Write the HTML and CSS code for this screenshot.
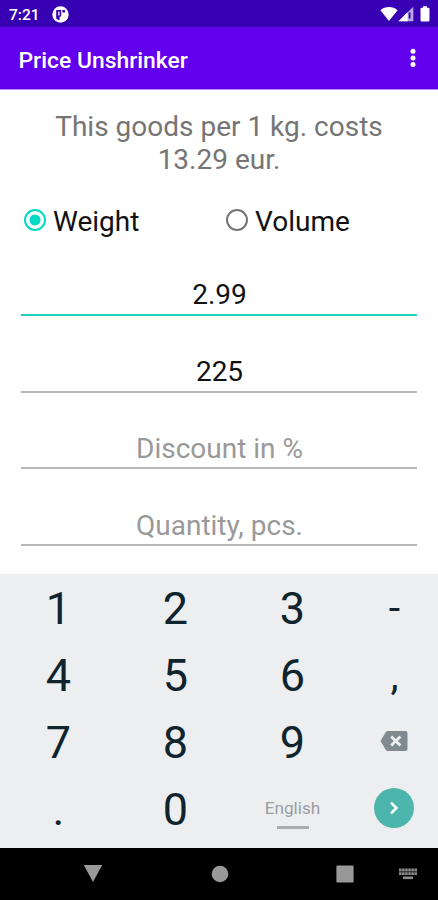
FILE: index.html
```
<!DOCTYPE html>
<html lang="en">
<head>
    <meta charset="UTF-8">
    <meta name="viewport" content="width=device-width, initial-scale=1.0">
    <title>Price Unshrinker</title>
    <link rel="stylesheet" href="styles.css">
</head>

<body>

    <!-- Status Bar -->
    <div class="statusbar">
        <span class="time">7:21</span>
        <svg class="notification" width="17" height="17" viewBox="0 0 17 17">
            <circle cx="8.5" cy="8.5" r="8.2" fill="#fff"/>
            <path d="M4.2 4h5v6.6H7.6V14H6.2L4.2 12.4zM10.4 4h2.6v2.6h-2.6z" fill="#3700b3"/>
            <path d="M6.9 5.4v4.2" stroke="#fff" stroke-width="1.3"/>
        </svg>
        <div class="status-icons">
            <svg width="18" height="16" viewBox="0 0 18 16">
                <path d="M0.4 4.2C5.2 0 12.8 0 17.6 4.2L9 15z" fill="#fff"/>
            </svg>
            <svg width="16" height="16" viewBox="0 0 16 16">
                <path d="M0.5 15.3L15.3 0.7v14.6z" fill="#b9a6e4"/>
                <path d="M0.5 15.3L9.6 6.3v9z" fill="#fff"/>
                <path d="M11.6 6.5v6" stroke="#3700b3" stroke-width="1.8"/>
            </svg>
            <svg class="battery" width="10" height="16" viewBox="0 0 10 16">
                <path d="M3 0.3h4v1.5h1.3q1.2 0 1.2 1.2v11.2q0 1.2-1.2 1.2H1.7q-1.2 0-1.2-1.2V3q0-1.2 1.2-1.2H3z" fill="#fff"/>
            </svg>
        </div>
    </div>

    <!-- App Bar -->
    <header class="appbar">
        <h1>Price Unshrinker</h1>
        <svg width="6" height="20" viewBox="0 0 6 20" fill="#fff">
            <circle cx="3" cy="3.2" r="2.5"/>
            <circle cx="3" cy="9.9" r="2.5"/>
            <circle cx="3" cy="16.6" r="2.5"/>
        </svg>
    </header>

    <!-- Calculator Form -->
    <main class="content">
        <p class="result">This goods per 1 kg. costs<br>13.29 eur.</p>

        <div class="units">
            <label class="unit"><span class="radio checked"></span>Weight</label>
            <label class="unit"><span class="radio"></span>Volume</label>
        </div>

        <form class="fields">
            <input class="active" type="text" value="2.99">
            <input type="text" value="225">
            <input type="text" placeholder="Discount in %">
            <input type="text" placeholder="Quantity, pcs.">
        </form>
    </main>

    <!-- Keyboard -->
    <div class="keyboard">
        <div class="key">1</div>
        <div class="key">2</div>
        <div class="key">3</div>
        <div class="key symbol">-</div>
        <div class="key">4</div>
        <div class="key">5</div>
        <div class="key">6</div>
        <div class="key symbol">,</div>
        <div class="key">7</div>
        <div class="key">8</div>
        <div class="key">9</div>
        <div class="key action">
            <svg width="28" height="20" viewBox="0 0 28 20">
                <path d="M7.6 0H25.5Q27.5 0 27.5 2V18Q27.5 20 25.5 20H7.6Q6.6 20 6 19.2L0.5 10L6 0.8Q6.6 0 7.6 0z" fill="#7f8b8e"/>
                <path d="M11.2 5.4l9.2 9.2M20.4 5.4l-9.2 9.2" stroke="#eceff1" stroke-width="2.8"/>
            </svg>
        </div>
        <div class="key">.</div>
        <div class="key">0</div>
        <div class="key space">English</div>
        <div class="key action">
            <div class="next">
                <svg width="10" height="14" viewBox="0 0 10 14">
                    <path d="M2 1.6L7.4 7L2 12.4" fill="none" stroke="#fff" stroke-width="2.6"/>
                </svg>
            </div>
        </div>
    </div>

    <!-- Navigation Bar -->
    <nav class="navbar">
        <svg width="20" height="18" viewBox="0 0 20 18"><path d="M0.8 0h18.4L10 17z" fill="#999"/></svg>
        <svg width="18" height="18" viewBox="0 0 18 18"><circle cx="9" cy="9" r="8.3" fill="#999"/></svg>
        <svg width="18" height="18" viewBox="0 0 18 18"><rect x="0.4" y="0.4" width="17.2" height="17.2" rx="1" fill="#999"/></svg>
        <svg class="switcher" width="18" height="12" viewBox="0 0 18 12">
            <path d="M0 2h18M0 5.6h18" stroke="#8a8a8a" stroke-width="2.8" stroke-dasharray="2.6 0.48"/>
            <path d="M4 9.8h10" stroke="#8a8a8a" stroke-width="2.6"/>
        </svg>
    </nav>

</body>
</html>
```
FILE: styles.css
```
* {
    box-sizing: border-box;
}

body {
    font-family: Roboto, "Liberation Sans", sans-serif;
    margin: 0;
    height: 900px;
    display: flex;
    flex-direction: column;
    background-color: #fff;
    overflow: hidden;
}

svg {
    display: block;
}

/* Status Bar Styles */
.statusbar {
    height: 27px;
    display: flex;
    align-items: center;
    padding: 1px 8px 0 9px;
    background-color: #3700b3;
    color: #fff;
}

.time {
    width: 43px;
    padding-top: 1px;
    font-size: 15.5px;
    font-weight: 500;
}

.status-icons {
    display: flex;
    margin-left: auto;
}

.battery {
    margin-left: 6px;
}

/* App Bar Styles */
.appbar {
    height: 63px;
    display: flex;
    align-items: center;
    justify-content: space-between;
    padding: 0 22px 0 18.5px;
    background-color: #6200ee;
    border-bottom: 1px solid #b78bf5;
    color: #fff;
}

.appbar h1 {
    margin: 4px 0 0;
    font-size: 22.9px;
    font-weight: 500;
}

/* Form Styles */
.content {
    height: 484px;
    padding: 20px 21px 0;
}

.result {
    margin: 0;
    font-size: 28px;
    line-height: 33px;
    text-align: center;
    color: #757575;
}

.units {
    display: grid;
    grid-template-columns: 202px 1fr;
    margin: 29px 0 39px 3px;
}

.unit {
    display: flex;
    align-items: center;
    gap: 7px;
    font-size: 28px;
    line-height: 33px;
    color: #111;
}

.radio {
    width: 22px;
    height: 22px;
    margin-top: -4px;
    border: 2px solid #757575;
    border-radius: 50%;
}

.radio.checked {
    border-color: #03dac5;
    background: radial-gradient(circle, #03dac5 5px, transparent 6px);
}

.fields {
    display: grid;
    gap: 37.6px;
}

.fields input {
    width: 100%;
    height: 39px;
    padding: 0 0 2px 1px;
    border: none;
    border-bottom: 2px solid #b8b8b8;
    border-radius: 0;
    outline: none;
    background: none;
    font-family: inherit;
    font-size: 28px;
    line-height: 33px;
    text-align: center;
    color: #111;
}

.fields input.active {
    border-bottom-color: #1fd0bd;
}

.fields input:placeholder-shown {
    padding-bottom: 0;
}

.fields input::placeholder {
    color: #999;
}

/* Keyboard Styles */
.keyboard {
    height: 274px;
    display: grid;
    grid-template-columns: repeat(3, 117px) 1fr;
    grid-template-rows: repeat(4, 67px);
    padding-top: 1px;
    background-color: #eceef0;
}

.key {
    display: flex;
    align-items: center;
    justify-content: center;
    font-size: 45px;
    line-height: 67px;
    color: #10242e;
}

.key.symbol {
    font-size: 41px;
}

.key.action {
    padding: 0 1px 3px 0;
}

.key.space {
    flex-direction: column;
    gap: 7px;
    padding-top: 8px;
    font-size: 17.2px;
    line-height: 21px;
    color: #9a9fa1;
}

.key.space::after {
    content: "";
    width: 32px;
    height: 3px;
    background-color: #a9adaf;
}

.next {
    width: 40px;
    height: 40px;
    display: flex;
    align-items: center;
    justify-content: center;
    border-radius: 50%;
    background-color: #4db6ac;
}

/* Navigation Bar Styles */
.navbar {
    height: 52px;
    display: flex;
    align-items: center;
    gap: 107.5px;
    padding-left: 83px;
    background-color: #000;
}

.navbar .switcher {
    margin-left: -62.5px;
}
```
